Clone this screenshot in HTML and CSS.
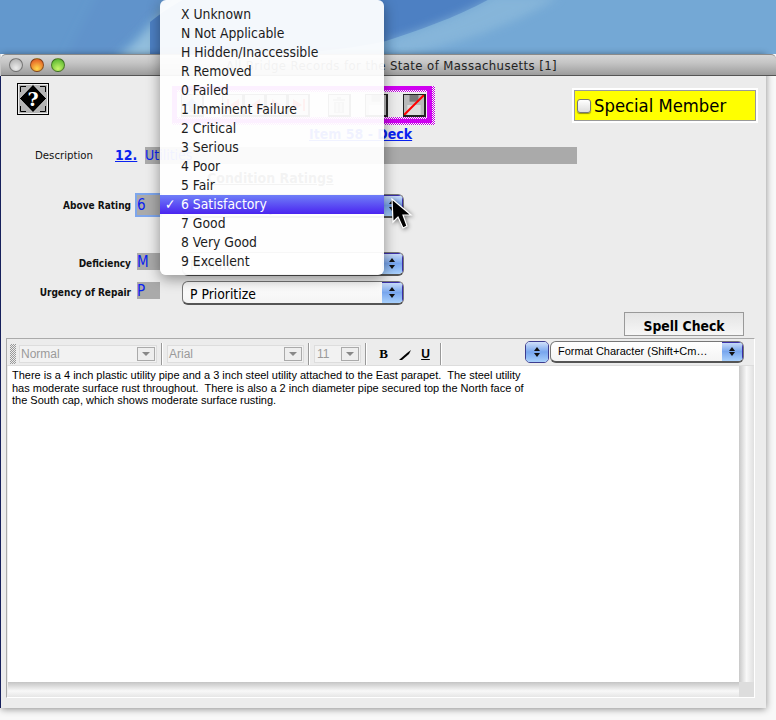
FILE: index.html
```html
<!DOCTYPE html>
<html lang="en">
<head>
  <meta charset="UTF-8" />
  <title>Bridge Records</title>
  <link rel="stylesheet" href="styles.css">
</head>
<body>
  <div class="desktop">
    <svg width="776" height="54" viewBox="0 0 776 54">
      <defs>
        <filter id="soft"><feGaussianBlur stdDeviation="5" /></filter>
      </defs>
      <rect width="776" height="54" fill="#74a8d5" />
      <rect width="160" height="54" fill="#6398cd" />
      <path d="M95 70 C130 40 150 15 190 -10 L100 -10 L60 70 Z" fill="#6093cb" filter="url(#soft)" />
      <path d="M115 60 C140 40 155 20 175 -5 L230 -5 L180 60 Z" fill="#92bedd" filter="url(#soft)" />
      <path d="M150 22 C165 10 175 4 190 -4 L495 -4 C460 16 420 30 386 41 C320 56 230 56 150 60 Z" fill="#4d80c3" />
      <path d="M386 41 C420 30 460 16 495 -4 L560 -4 C520 22 460 45 400 56 Z" fill="#8ebbdc" opacity="0.7" filter="url(#soft)" />
    </svg>
  </div>

  <div class="window">
    <div class="titlebar">
      <span class="light light-gray"></span>
      <span class="light light-orange"></span>
      <span class="light light-green"></span>
      <span class="title">All Bridge Records for the State of Massachusetts [1]</span>
    </div>

    <div class="content">
      <div class="head">
        <div class="help">
          <svg width="32" height="32" viewBox="0 0 32 32">
            <path d="M3.5 9V3.5H9M23 3.5H28.5V9M3.5 23V28.5H9M23 28.5H28.5V23" fill="none" stroke="#000" />
            <path d="M16 1.5L29.5 15.5L16 29.5L2.5 15.5Z" fill="#000" stroke="#fff" stroke-width="0.6" />
            <text x="16" y="22.5" class="help-mark">?</text>
          </svg>
        </div>
        <div class="nav-frame">
          <div class="nav-inner">
            <div class="nav-row">
              <span class="nav-btn nav-first">
                <svg width="18" height="18" viewBox="0 0 18 18"><path d="M9 2L16 10H12V16H6V10H2Z" fill="#3a6fd0" /></svg>
              </span>
              <span class="nav-group">
                <span class="nav-btn"><svg width="18" height="18" viewBox="0 0 18 18"><path d="M3 3H5V15H3ZM15 3V15L6 9Z" fill="#e01010" /></svg></span>
                <span class="nav-btn"><svg width="18" height="18" viewBox="0 0 18 18"><path d="M14 3V15L5 9Z" fill="#e01010" /></svg></span>
                <span class="nav-btn"><svg width="18" height="18" viewBox="0 0 18 18"><path d="M4 3V15L13 9Z" fill="#e01010" /></svg></span>
                <span class="nav-btn"><svg width="18" height="18" viewBox="0 0 18 18"><path d="M13 3H15V15H13ZM3 3V15L12 9Z" fill="#e01010" /></svg></span>
              </span>
              <span class="nav-btn nav-trash">
                <svg width="18" height="18" viewBox="0 0 18 18"><path d="M7 1H11V3H15V5H3V3H7ZM4 6H14V17H4Z" fill="#777" /><path d="M7 7V16M11 7V16" stroke="#ddd" /></svg>
              </span>
              <span class="nav-btn nav-disk">
                <svg width="20" height="20" viewBox="0 0 18 18"><use href="#disk" /></svg>
              </span>
              <span class="nav-btn nav-nosave">
                <svg width="20" height="20" viewBox="0 0 18 18">
                  <g id="disk"><path d="M0 0H18V18H0Z" fill="#b9b9b9" /><path d="M5 0H13V6H5Z" fill="#777" /><path d="M3 9H15V18H3Z" fill="#dcdcdc" /></g>
                  <path d="M0 18L18 0" stroke="#f00" stroke-width="1.8" />
                </svg>
              </span>
            </div>
          </div>
        </div>
        <div class="special">
          <label class="special-inner"><span class="check"></span>Special Member</label>
        </div>
      </div>

      <div class="item-title"><a href="#">Item 58 - Deck</a></div>

      <div class="desc-row">
        <span class="desc-label">Description</span>
        <a href="#" class="desc-num">12.</a>
        <span class="desc-field">Utilities</span>
      </div>

      <div class="ratings-title"><u>Condition Ratings</u></div>

      <div class="rating rating-above">
        <span class="rating-label">Above Rating</span>
        <span class="code code-focus">6</span>
        <span class="popup popup-wide"><span class="popup-text">6 Satisfactory</span><span class="cap"></span></span>
      </div>
      <div class="rating rating-def">
        <span class="rating-label">Deficiency</span>
        <span class="code">M</span>
        <span class="popup popup-wide"><span class="popup-text">M Minor</span><span class="cap"></span></span>
      </div>
      <div class="rating rating-urg">
        <span class="rating-label">Urgency of Repair</span>
        <span class="code">P</span>
        <span class="popup popup-wide"><span class="popup-text">P Prioritize</span><span class="cap"></span></span>
      </div>

      <div class="spell-row"><button class="spell">Spell Check</button></div>

      <div class="editor">
        <div class="editor-bar">
          <span class="grip"></span>
          <span class="combo combo-style">Normal<span class="combo-arrow"></span></span>
          <span class="sep"></span>
          <span class="combo combo-font">Arial<span class="combo-arrow"></span></span>
          <span class="sep"></span>
          <span class="combo combo-size">11<span class="combo-arrow"></span></span>
          <span class="sep"></span>
          <span class="fmt fmt-b">B</span>
          <span class="fmt fmt-i">
            <svg width="14" height="10" viewBox="0 0 14 10"><path d="M1 10L9 3L13 0L11 4L4 10Z" fill="#000" /></svg>
          </span>
          <span class="fmt fmt-u">U</span>
          <span class="sep sep-last"></span>
          <span class="stepper"><span class="cap cap-solo"></span></span>
          <span class="popup popup-format"><span class="popup-text">Format Character (Shift+Cm…</span><span class="cap"></span></span>
        </div>
        <div class="editor-main">
          <div class="editor-text">There is a 4 inch plastic utility pipe and a 3 inch steel utility attached to the East parapet.&nbsp; The steel utility<br>has moderate surface rust throughout.&nbsp; There is also a 2 inch diameter pipe secured top the North face of<br>the South cap, which shows moderate surface rusting.</div>
          <div class="scroll-v"></div>
        </div>
        <div class="scroll-row">
          <div class="scroll-h"></div>
          <div class="scroll-corner"></div>
        </div>
      </div>
    </div>
  </div>

  <ul class="menu">
    <li>X Unknown</li>
    <li>N Not Applicable</li>
    <li>H Hidden/Inaccessible</li>
    <li>R Removed</li>
    <li>0 Failed</li>
    <li>1 Imminent Failure</li>
    <li>2 Critical</li>
    <li>3 Serious</li>
    <li>4 Poor</li>
    <li>5 Fair</li>
    <li class="selected"><span class="tick">✓</span>6 Satisfactory</li>
    <li>7 Good</li>
    <li>8 Very Good</li>
    <li>9 Excellent</li>
  </ul>

  <svg class="cursor" width="24" height="34" viewBox="0 0 24 34">
    <path d="M1 1L2 24L7 19L12 30L16 28L12 17L20 17Z" fill="#000" stroke="#fff" stroke-width="1.2" />
  </svg>
</body>
</html>
```

FILE: styles.css
```css
* {
  box-sizing: border-box;
}
html, body {
  margin: 0;
  height: 720px;
  overflow: hidden;
}
body {
  position: relative;
  width: 776px;
  background: #f8f8f8;
  font-family: "DejaVu Sans Condensed", "DejaVu Sans", sans-serif;
  color: #000;
}
a {
  color: #0a22f0;
}

.desktop {
  height: 54px;
}
.desktop svg {
  display: block;
}

.window {
  width: 765px;
  margin-left: 1px;
  height: 654px;
  box-shadow: 0 1px 7px rgba(0, 0, 0, 0.45);
  position: relative;
}
.titlebar {
  height: 22px;
  display: flex;
  align-items: center;
  padding-left: 8px;
  gap: 7px;
  width: 775px;
  background: linear-gradient(#d6d6d6, #c4c4c4 40%, #9c9c9c);
  border-top: 1px solid #8a8a8a;
  border-bottom: 1px solid #555;
  border-radius: 5px 5px 0 0;
}
.light {
  width: 14px;
  height: 14px;
  border-radius: 50%;
  border: 1px solid rgba(0, 0, 0, 0.4);
}
.light-gray {
  background: radial-gradient(circle at 50% 75%, #ececec, #a8a8a8);
}
.light-orange {
  background: radial-gradient(circle at 50% 80%, #ffd84a, #e8702a 70%, #b8561e);
}
.light-green {
  background: radial-gradient(circle at 50% 80%, #c8f56a, #6cc23a 70%, #4a962a);
}
.title {
  margin-left: 154px;
  font-size: 13px;
  letter-spacing: 0.41px;
  color: #222;
  white-space: nowrap;
}

.content {
  height: 632px;
  background: #ececec;
  border-left: 1px solid #16205c;
  margin-left: -1px;
  width: 766px;
  display: flow-root;
}

.head {
  display: flex;
  align-items: flex-start;
  height: 50px;
}
.help {
  width: 32px;
  height: 32px;
  margin: 7px 0 0 16px;
  background: #b4b4b4;
  border: 1px solid #000;
  box-shadow: inset 0 0 0 1px #eee;
  line-height: 0;
}
.help svg {
  margin: -1px;
}
.help-mark {
  font-family: "DejaVu Serif", "Liberation Serif", serif;
  font-weight: bold;
  font-size: 19px;
  fill: #fff;
  text-anchor: middle;
}

.nav-frame {
  width: 263px;
  height: 39px;
  margin: 10px 0 0 123px;
  padding: 0 3px 2px 0;
  background: repeating-conic-gradient(#c000e0 0 25%, #fff 0 50%) 0 0 / 2px 2px;
}
.nav-inner {
  height: 37px;
  border: solid #cf00f0;
  border-width: 4px 5px;
  background: repeating-conic-gradient(#c000e0 0 25%, #fff 0 50%) 0 0 / 2px 2px;
  padding: 2px 0;
}
.nav-row {
  height: 25px;
  display: flex;
  align-items: flex-end;
  padding-left: 4px;
  background: #ececec;
}
.nav-btn {
  width: 23px;
  height: 23px;
  display: flex;
  align-items: center;
  justify-content: center;
  background: #c4c4c4;
  border: 1px solid #222;
  border-right-width: 2px;
  border-bottom-width: 2px;
  flex: none;
  overflow: hidden;
}
.nav-group {
  display: flex;
  margin-left: 18px;
}
.nav-group .nav-btn {
  width: 22px;
}
.nav-trash {
  margin-left: 18px;
}
.nav-disk {
  margin-left: 14px;
}
.nav-nosave {
  margin-left: 15px;
}

.special {
  width: 186px;
  height: 35px;
  margin: 12px 0 0 137px;
  padding: 2px;
  background: #fff;
}
.special-inner {
  display: flex;
  align-items: center;
  height: 31px;
  border: 1px solid #999;
  background: #ff0;
  font-size: 18.3px;
  padding-left: 2px;
  gap: 3px;
}
.check {
  width: 14px;
  height: 14px;
  border-radius: 3px;
  background: linear-gradient(#fff, #ddd);
  border: 1px solid #777;
  box-shadow: 0 1px 1px rgba(0, 0, 0, 0.4);
}

.item-title {
  height: 20px;
  padding-left: 308px;
  font-size: 14px;
  font-weight: bold;
  line-height: 17px;
}
.desc-row {
  display: flex;
  align-items: center;
  height: 18px;
  font-size: 11.3px;
}
.desc-label {
  width: 114px;
  padding-left: 34px;
  color: #111;
}
.desc-num {
  width: 30px;
  font-size: 14px;
  font-weight: bold;
}
.desc-field {
  width: 432px;
  height: 17px;
  background: #aaa;
  color: #0a22f0;
  font-size: 14px;
  line-height: 17px;
}
.ratings-title {
  height: 30px;
  padding: 5px 0 0 206px;
  font-size: 14px;
  font-weight: bold;
  line-height: 18px;
  color: #333;
}

.rating {
  display: flex;
  align-items: flex-start;
  height: 24px;
}
.rating-def {
  margin-top: 34px;
}
.rating-urg {
  margin-top: 5px;
}
.rating-label {
  width: 130px;
  text-align: right;
  font-size: 10px;
  font-weight: bold;
  line-height: 24px;
  color: #111;
}
.code {
  width: 23px;
  height: 17px;
  margin: 1px 22px 0 6px;
  background: #aaa;
  color: #0a22f0;
  font-size: 15px;
  line-height: 19px;
}
.code-focus {
  height: 20px;
  line-height: 21px;
  box-shadow: 0 0 0 2px #7ea6ec;
}

.popup {
  display: flex;
  align-items: center;
  justify-content: space-between;
  height: 24px;
  background: linear-gradient(#fff, #f4f4f4);
  border: 1px solid #777;
  border-bottom: 2px solid #555;
  border-radius: 6px;
  overflow: hidden;
}
.popup-wide {
  width: 222px;
}
.popup-text {
  padding: 3px 0 0 7px;
  font-size: 13.8px;
  white-space: nowrap;
}
.cap {
  position: relative;
  display: block;
  width: 21px;
  height: 100%;
  background: linear-gradient(#d0e0fa, #78a6ee 50%, #a8d0fc);
  box-shadow: inset 0 1px 0 #3b2fa8, inset -1px 0 0 #3b2fa8;
}
.cap::before, .cap::after {
  content: "";
  position: absolute;
  left: 7px;
  border-left: 3px solid transparent;
  border-right: 3px solid transparent;
}
.cap::before {
  top: 5px;
  border-bottom: 4px solid #111;
}
.cap::after {
  bottom: 5px;
  border-top: 4px solid #111;
}

.spell-row {
  display: flex;
  justify-content: flex-end;
  height: 24px;
  margin-top: 7px;
  padding-right: 22px;
}
.spell {
  width: 120px;
  height: 24px;
  padding: 3px 0 0;
  border: 1px solid #999;
  border-radius: 0;
  background: linear-gradient(#e4e4e4, #f6f6f6);
  font-family: "DejaVu Sans Condensed", "DejaVu Sans", sans-serif;
  font-size: 13.8px;
  font-weight: bold;
}

.editor {
  width: 749px;
  height: 360px;
  margin: 2px 0 0 5px;
  border: 1px solid #aaa;
  border-right: 1px solid #fff;
  border-bottom: 1px solid #fff;
  display: flex;
  flex-direction: column;
}
.editor-bar {
  display: flex;
  align-items: center;
  flex: none;
  height: 27px;
  padding: 3px 0 0 3px;
  border-bottom: 1px solid #ddd;
}
.grip {
  width: 6px;
  height: 20px;
  margin-right: 3px;
  background: repeating-conic-gradient(#999 0 25%, #ececec 0 50%) 0 0 / 2px 2px;
}
.combo {
  display: flex;
  align-items: center;
  justify-content: space-between;
  height: 18px;
  padding: 0 1px 0 1px;
  background: #f2f2f2;
  border: 1px solid #ddd;
  color: #9a9a9a;
  font-family: "Liberation Sans", sans-serif;
  font-size: 12px;
}
.combo-style {
  width: 138px;
}
.combo-font {
  width: 137px;
}
.combo-size {
  width: 47px;
  padding-left: 2px;
}
.combo-arrow {
  position: relative;
  width: 18px;
  height: 14px;
  background: #eee;
  border: 1px solid #aaa;
}
.combo-arrow::after {
  content: "";
  position: absolute;
  left: 4px;
  top: 4px;
  border: 4px solid transparent;
  border-top: 4px solid #888;
}
.sep {
  width: 2px;
  height: 22px;
  margin: 0 4px;
  border-left: 1px solid #999;
  border-right: 1px solid #fff;
}
.fmt {
  width: 21px;
  text-align: center;
  font-family: "Liberation Serif", serif;
  font-size: 13px;
  font-weight: bold;
  line-height: 14px;
}
.fmt svg {
  display: block;
  margin: 2px auto 0;
}
.fmt-b {
  margin-left: 2px;
}
.fmt-u {
  text-decoration: underline;
  font-family: "Liberation Sans", sans-serif;
  font-size: 12px;
}
.sep-last {
  margin: 0 0 0 4px;
}
.stepper {
  width: 24px;
  height: 22px;
  margin: -4px 0 0 83px;
  border: 1px solid #3d3d8f;
  border-radius: 5px;
  overflow: hidden;
}
.cap-solo {
  width: 100%;
  box-shadow: none;
}
.cap-solo::before, .cap-solo::after {
  left: 8px;
}
.popup-format {
  width: 194px;
  height: 22px;
  margin: -4px 0 0 1px;
}
.popup-format .popup-text {
  padding: 0 0 0 7px;
  font-family: "Liberation Sans", sans-serif;
  font-size: 11px;
}
.editor-main {
  display: flex;
  flex: 1;
  min-height: 0;
  padding-left: 1px;
}
.editor-text {
  flex: 1;
  background: #fff;
  padding: 3px 4px;
  font-family: "Liberation Sans", sans-serif;
  font-size: 11px;
  line-height: 12.5px;
}
.scroll-v {
  width: 15px;
  background: linear-gradient(90deg, #c8c8c8, #f8f8f8 50%, #e0e0e0);
}
.scroll-row {
  display: flex;
  flex: none;
  height: 15px;
  padding-left: 1px;
}
.scroll-h {
  flex: 1;
  background: linear-gradient(#c4c4c4, #f8f8f8 60%, #e6e6e6);
}
.scroll-corner {
  width: 15px;
  background: #ddd;
}

.menu {
  position: absolute;
  left: 160px;
  top: 0;
  width: 224px;
  height: 275px;
  margin: 0;
  padding: 5px 0 0;
  list-style: none;
  background: rgba(255, 255, 255, 0.94);
  border-radius: 6px;
  box-shadow: 0 4px 14px rgba(0, 0, 0, 0.4);
  font-size: 13.8px;
}
.menu li {
  position: relative;
  height: 19px;
  padding-left: 21px;
  line-height: 19px;
  color: #1c1c1c;
}
.menu .selected {
  background: linear-gradient(#6f7ff8, #4a24f0);
  color: #fff;
}
.tick {
  position: absolute;
  left: 5px;
}
.cursor {
  position: absolute;
  left: 391px;
  top: 198px;
  filter: drop-shadow(1px 1px 2px rgba(0, 0, 0, 0.5));
}
```
